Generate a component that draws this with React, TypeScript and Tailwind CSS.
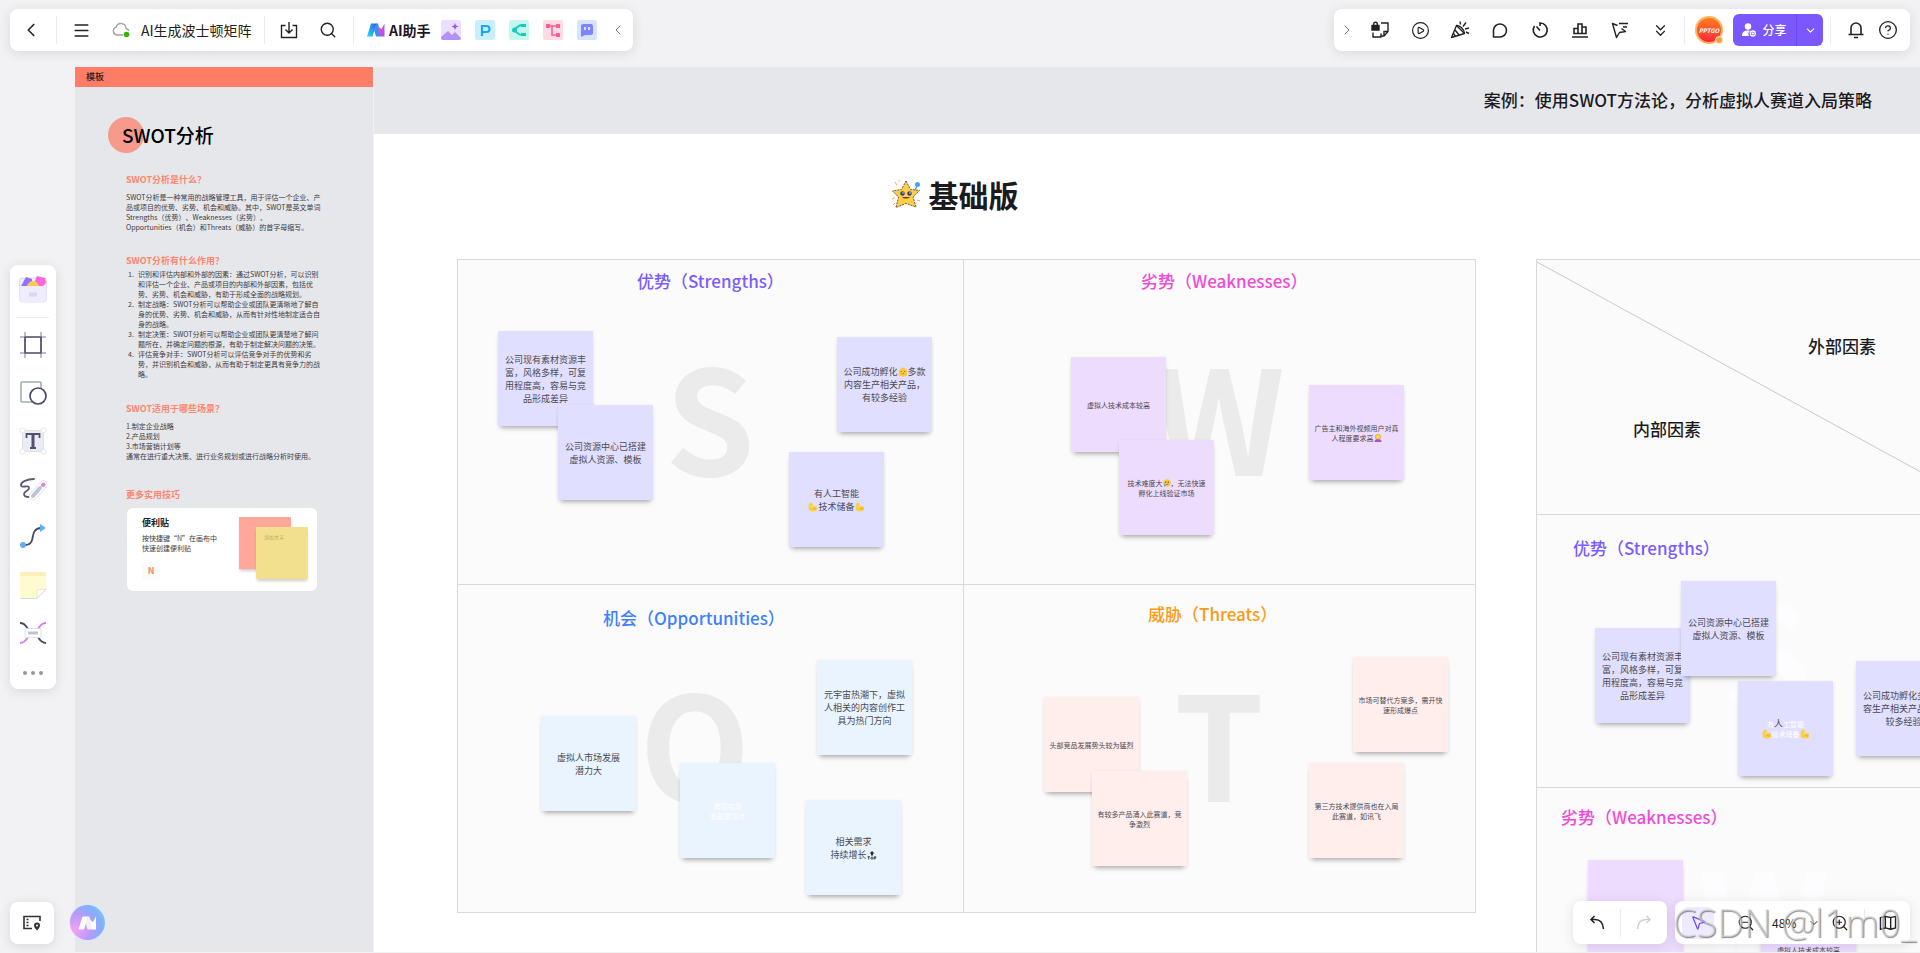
import type { ReactNode } from "react";
import {
  Bell,
  ChevronDown,
  ChevronLeft,
  ChevronRight,
  ChevronsDown,
  CircleHelp,
  CirclePlay,
  Menu,
  MousePointer2,
  Search,
  ZoomIn,
  ZoomOut,
} from "lucide-react";

/* ---------- shared bits ---------- */

const bar =
  "flex items-center rounded-lg bg-white shadow-[0_2px_12px_rgba(30,30,60,0.12)]";

function IconButton({
  label,
  className = "w-10",
  children,
}: {
  label: string;
  className?: string;
  children: ReactNode;
}) {
  return (
    <button
      type="button"
      aria-label={label}
      className={`flex h-8 shrink-0 items-center justify-center text-[#222] ${className}`}
    >
      {children}
    </button>
  );
}

function Divider({ className = "" }: { className?: string }) {
  return <span className={`h-7 w-px shrink-0 bg-[#ebebee] ${className}`} />;
}

/* ---------- emoji ---------- */

function Muscle() {
  return (
    <svg viewBox="0 0 18 18" className="inline size-[10px] align-[-2px]">
      <path
        d="M4 1l4 1 1 4-3 1v3c2-3 8-4 10 0 2 5-1 7-8 7-5 0-7-2-7-6 0-5 1-8 3-10z"
        fill="#fcd03d"
      />
      <path d="M9 11c2 2 4 2 6 0" stroke="#dd9a24" strokeWidth="1.4" fill="none" />
    </svg>
  );
}

function BlobFace() {
  return (
    <svg viewBox="0 0 18 18" className="inline size-[10px] align-[-2px]">
      <path
        d="M9 1c3 0 4 2 5 3 3 1 3 4 2 6 2 3 0 7-3 6-2 2-6 2-8 0-3 1-5-3-3-6-1-3 0-5 2-6 1-1 2-3 5-3z"
        fill="#fcc63d"
      />
      <circle cx="6" cy="8" r="1" fill="#8a5a1a" />
      <circle cx="12" cy="8" r="1" fill="#8a5a1a" />
      <path d="M7 12h4" stroke="#d8743a" strokeWidth="1.6" />
    </svg>
  );
}

function TearFace() {
  return (
    <svg viewBox="0 0 18 18" className="inline size-[8px] align-[-1px]">
      <circle cx="9" cy="9" r="8.5" fill="#fcc63d" />
      <circle cx="6" cy="7" r="1.5" fill="#5a3a12" />
      <circle cx="12" cy="7" r="1.5" fill="#5a3a12" />
      <path d="M7 13c1-2 4-2 5 0" stroke="#5a3a12" strokeWidth="1.4" fill="none" />
      <path d="M4 10c3 4 2 7 0 7s-3-3 0-7z" fill="#4aa6f5" />
    </svg>
  );
}

function Shrug() {
  return (
    <svg viewBox="0 0 18 18" className="inline size-[8px] align-[-1px]">
      <circle cx="9" cy="7" r="7" fill="#f5b335" />
      <circle cx="9" cy="7" r="4.5" fill="#fcd65e" />
      <path d="M1 18c0-5 4-6 8-6s8 1 8 6z" fill="#9b59d0" />
    </svg>
  );
}

function TopMark() {
  return (
    <svg viewBox="0 0 20 18" className="inline h-[9px] w-[10px] align-[-2px]">
      <path d="M10 0l5 5h-3v4H8V5H5z" fill="#2a2a30" />
      <path
        d="M1 11.5h5M3.5 11.5V17M14.5 17v-5.5h3v3h-3"
        stroke="#2a2a30"
        strokeWidth="1.7"
        fill="none"
      />
      <circle cx="10" cy="14.2" r="2.2" stroke="#2a2a30" strokeWidth="1.7" fill="none" />
    </svg>
  );
}

function StarFace() {
  return (
    <svg viewBox="0 0 30 30" className="size-[30px]">
      <path
        d="M15 2l4.500 8.500 9 1-6.500 6.500 3 10L15 24.500 5 28.500l2.500-10.500L1.500 12l9-1.500z"
        fill="#ffcf4a"
        stroke="#55482c"
        strokeWidth="0.9"
        strokeLinejoin="round"
        strokeDasharray="2 1"
      />
      <circle cx="11.5" cy="14.5" r="2.2" fill="#2c3d7c" />
      <circle cx="18.5" cy="14.5" r="2.2" fill="#2c3d7c" />
      <circle cx="12" cy="14" r="0.7" fill="#fff" />
      <circle cx="19" cy="14" r="0.7" fill="#fff" />
      <path d="M11 18c2 2 6 2 8 0z" fill="#7d2f1d" />
      <path
        d="M4 3l2 3M8 1l.5 1.500M1 20l3-1.500M2 26l2-2M26 21l3 1"
        stroke="#ff9b6b"
        strokeWidth="1"
      />
      <path d="M26 7l-2 4" stroke="#3f8ff5" strokeWidth="1.2" />
      <circle cx="26.5" cy="5.5" r="2.5" fill="#47a3ff" />
    </svg>
  );
}

/* ---------- board ---------- */

interface NoteData {
  x: number;
  y: number;
  small?: boolean;
  faded?: boolean;
  body: ReactNode;
}

interface CellData {
  title: string;
  titleAt: [number, number];
  titleClass: string;
  letter: string;
  letterAt: [number, number];
  noteClass: string;
  notes: NoteData[];
}

const reuse = (
  <>
    公司现有素材资源丰
    <br />
    富，风格多样，可复
    <br />
    用程度高，容易与竞
    <br />
    品形成差异
  </>
);

const center = (
  <>
    公司资源中心已搭建
    <br />
    虚拟人资源、模板
  </>
);

const strengths: CellData = {
  title: "优势（Strengths）",
  titleAt: [179, 8],
  titleClass: "text-[#7b5cff]",
  letter: "S",
  letterAt: [252, 153],
  noteClass: "bg-[#e1dfff]",
  notes: [
    { x: 40, y: 71, body: reuse },
    { x: 100, y: 145, body: center },
    {
      x: 379,
      y: 77,
      body: (
        <>
          公司成功孵化
          <BlobFace />
          多款
          <br />
          内容生产相关产品，
          <br />
          有较多经验
        </>
      ),
    },
    {
      x: 331,
      y: 192,
      body: (
        <>
          有人工智能
          <br />
          <Muscle />
          技术储备
          <Muscle />
        </>
      ),
    },
  ],
};

const weaknesses: CellData = {
  title: "劣势（Weaknesses）",
  titleAt: [177, 8],
  titleClass: "text-[#f04bd8]",
  letter: "W",
  letterAt: [255, 153],
  noteClass: "bg-[#eedcfe]",
  notes: [
    { x: 107, y: 97, small: true, body: "虚拟人技术成本较高" },
    {
      x: 155,
      y: 180,
      small: true,
      body: (
        <>
          技术难度大
          <TearFace />
          ，无法快速
          <br />
          孵化上线验证市场
        </>
      ),
    },
    {
      x: 345,
      y: 125,
      small: true,
      body: (
        <>
          广告主和海外视频用户对真
          <br />
          人程度要求高
          <Shrug />
        </>
      ),
    },
  ],
};

const opportunities: CellData = {
  title: "机会（Opportunities）",
  titleAt: [145, 20],
  titleClass: "text-[#3d80ff]",
  letter: "O",
  letterAt: [237, 154],
  noteClass: "bg-[#e9f4ff]",
  notes: [
    {
      x: 83,
      y: 131,
      body: (
        <>
          虚拟人市场发展
          <br />
          潜力大
        </>
      ),
    },
    {
      x: 222,
      y: 178,
      small: true,
      faded: true,
      body: (
        <>
          跨境电商
          <br />
          有政策扶持
        </>
      ),
    },
    {
      x: 359,
      y: 75,
      body: (
        <>
          元宇宙热潮下，虚拟
          <br />
          人相关的内容创作工
          <br />
          具为热门方向
        </>
      ),
    },
    {
      x: 348,
      y: 215,
      body: (
        <>
          相关需求
          <br />
          持续增长
          <TopMark />
        </>
      ),
    },
  ],
};

const threats: CellData = {
  title: "威胁（Threats）",
  titleAt: [184, 16],
  titleClass: "text-[#fa9a14]",
  letter: "T",
  letterAt: [255, 154],
  noteClass: "bg-[#ffeeec]",
  notes: [
    { x: 80, y: 112, small: true, body: "头部竞品发展势头较为猛烈" },
    {
      x: 128,
      y: 186,
      small: true,
      body: (
        <>
          有较多产品涌入此赛道，竞
          <br />
          争激烈
        </>
      ),
    },
    {
      x: 389,
      y: 72,
      small: true,
      body: (
        <>
          市场可替代方案多，需开快
          <br />
          速形成爆点
        </>
      ),
    },
    {
      x: 345,
      y: 178,
      small: true,
      body: (
        <>
          第三方技术提供商也在入局
          <br />
          此赛道，如讯飞
        </>
      ),
    },
  ],
};

const strengthsRow: CellData = {
  ...strengths,
  titleAt: [36, 20],
  letterAt: [230, 133],
  notes: [
    { x: 58, y: 113, body: reuse },
    { x: 144, y: 66, body: center },
    {
      x: 201,
      y: 166,
      small: true,
      faded: true,
      body: (
        <>
          有<span className="text-[9px] text-[#4a4a52]">人</span>工智能
          <br />
          <Muscle />
          技术储备
          <Muscle />
        </>
      ),
    },
    {
      x: 319,
      y: 146,
      body: (
        <>
          公司成功孵化多款内
          <br />
          容生产相关产品，有
          <br />
          较多经验
        </>
      ),
    },
  ],
};

const weaknessesRow: CellData = {
  ...weaknesses,
  titleAt: [24, 16],
  letterAt: [227, 128],
  notes: [
    { x: 51, y: 72, small: true, body: null },
    { x: 224, y: 114, small: true, body: "虚拟人技术成本较高" },
  ],
};

function Note({ note, className }: { note: NoteData; className: string }) {
  return (
    <div
      style={{ left: note.x, top: note.y }}
      className={`absolute flex size-[95px] items-center justify-center text-center whitespace-nowrap shadow-[0_5px_5px_-3px_rgba(0,0,0,0.28),0_1px_4px_rgba(0,0,0,0.08)] ${className} ${
        note.small ? "text-[7px] leading-[10px]" : "text-[9px] leading-[13px]"
      } ${note.faded ? "text-white" : "text-[#4a4a52]"}`}
    >
      <p>{note.body}</p>
    </div>
  );
}

function Cell({ cell, letterClass = "text-[#ebebeb]" }: { cell: CellData; letterClass?: string }) {
  return (
    <section className="relative border-r border-b border-[#d9d9db] bg-[#fbfbfb]">
      <span
        style={{ left: cell.letterAt[0], top: cell.letterAt[1] }}
        className={`absolute -translate-1/2 text-[144px] leading-none font-bold select-none ${letterClass}`}
      >
        {cell.letter}
      </span>
      <h3
        style={{ left: cell.titleAt[0], top: cell.titleAt[1] }}
        className={`absolute text-[17px] leading-[26px] font-medium whitespace-nowrap ${cell.titleClass}`}
      >
        {cell.title}
      </h3>
      {cell.notes.map((note) => (
        <Note key={`${note.x}-${note.y}`} note={note} className={cell.noteClass} />
      ))}
    </section>
  );
}

function BasicBoard() {
  return (
    <div className="w-[1019px] shrink-0">
      <h2 className="flex h-10 items-center justify-center gap-2 pr-6 text-[30px] font-bold text-[#1b1b1f]">
        <StarFace />
        基础版
      </h2>
      <div className="mt-[45px] grid grid-cols-[506px_512px] grid-rows-[325px_328px] border-t border-l border-[#d9d9db]">
        <Cell cell={strengths} />
        <Cell cell={weaknesses} />
        <Cell cell={opportunities} />
        <Cell cell={threats} />
      </div>
    </div>
  );
}

function AdvancedBoard() {
  return (
    <div className="mt-[85px] grid w-[467px] shrink-0 grid-rows-[255px_273px_300px] border-t border-l border-[#d9d9db]">
      <div className="relative border-r border-b border-[#d9d9db] bg-[#fbfbfb] text-[17px] leading-[26px] font-medium text-[#1b1b1f]">
        <svg viewBox="0 0 466 255" className="absolute top-0 left-0 h-[255px] w-[466px]">
          <path d="M0 2L466 257" stroke="#c9c9cc" strokeWidth="1" />
        </svg>
        <span className="absolute top-[73px] left-[271px]">外部因素</span>
        <span className="absolute top-[156px] left-[96px]">内部因素</span>
      </div>
      <Cell cell={strengthsRow} letterClass="text-[#fdfdff]" />
      <Cell cell={weaknessesRow} letterClass="text-[#fdfdff]" />
    </div>
  );
}

/* ---------- template guide ---------- */

const tips = [
  ["识别和评估内部和外部的因素：通过SWOT分析，可以识别", "和评估一个企业、产品或项目的内部和外部因素，包括优", "势、劣势、机会和威胁，有助于形成全面的战略规划。"],
  ["制定战略：SWOT分析可以帮助企业或团队更清晰地了解自", "身的优势、劣势、机会和威胁，从而有针对性地制定适合自", "身的战略。"],
  ["制定决策：SWOT分析可以帮助企业或团队更清楚地了解问", "题所在，并确定问题的根源，有助于制定解决问题的决策。"],
  ["评估竞争对手：SWOT分析可以评估竞争对手的优势和劣", "势，并识别机会和威胁，从而有助于制定更具有竞争力的战", "略。"],
];

const guideHead = "text-[9px] leading-3 font-bold text-[#ff8570]";
const guideText = "text-[7px] leading-[10px] whitespace-pre text-[#3c3c42]";

function Guide() {
  return (
    <aside className="w-[298px] shrink-0 bg-[#e6e7eb]">
      <div className="h-5 bg-[#ff7d66] pl-[11px] text-[9px] leading-5 font-medium text-[#2b1c1a]">
        模板
      </div>
      <div className="pl-[51px]">
        <h1 className="relative z-0 mt-[30px] flex h-9 items-center text-[19px] font-medium text-black before:absolute before:-left-[18px] before:-z-10 before:size-9 before:rounded-full before:bg-[#f69b8b]">
          <span className="-ml-1">SWOT分析</span>
        </h1>
        <h2 className={`mt-[21px] ${guideHead}`}>SWOT分析是什么？</h2>
        <p className={`mt-[6px] ${guideText}`}>
          {`SWOT分析是一种常用的战略管理工具，用于评估一个企业、产
品或项目的优势、劣势、机会和威胁。其中，SWOT是英文单词
Strengths（优势）、Weaknesses（劣势）、
Opportunities（机会）和Threats（威胁）的首字母缩写。`}
        </p>
        <h2 className={`mt-[23px] ${guideHead}`}>SWOT分析有什么作用？</h2>
        <ol className={`mt-0.5 ${guideText}`}>
          {tips.map((lines, index) => (
            <li key={lines[0]} className="flex">
              <span className="w-3 pl-0.5">{index + 1}.</span>
              <span>{lines.join("\n")}</span>
            </li>
          ))}
        </ol>
        <h2 className={`mt-6 ${guideHead}`}>SWOT适用于哪些场景？</h2>
        <p className={`mt-[6px] ${guideText}`}>
          {`1.制定企业战略
2.产品规划
3.市场营销计划等
通常在进行重大决策、进行业务规划或进行战略分析时使用。`}
        </p>
        <h2 className={`mt-7 ${guideHead}`}>更多实用技巧</h2>
        <div className="mt-[7px] ml-px flex h-[83px] w-[190px] rounded-md bg-white pt-[9px] pl-[15px]">
          <div className="w-[97px]">
            <h3 className="text-[9px] leading-3 font-bold text-[#222]">便利贴</h3>
            <p className={`mt-1 ${guideText}`}>{`按快捷键“N”在画布中
快速创建便利贴`}</p>
            <kbd className="mt-[9px] flex size-[18px] items-center justify-center rounded-sm bg-[#fafafa] font-[inherit] text-[9px] font-bold text-[#ff8570]">
              N
            </kbd>
          </div>
          <div className="relative size-[52px] bg-[#ffa798] shadow-[0_3px_3px_-1px_rgba(0,0,0,0.2)]">
            <div className="absolute top-[10px] left-[17px] size-[52px] bg-[#f3e08f] pt-1.5 pl-2 text-[5px] text-[#b9ab6c] shadow-[0_3px_3px_-1px_rgba(0,0,0,0.2)]">
              添加文字
            </div>
          </div>
        </div>
      </div>
    </aside>
  );
}

/* ---------- toolbars ---------- */

function BrandMark({ className, mono }: { className: string; mono?: boolean }) {
  const id = mono ? "brand-mono" : "brand";
  return (
    <svg viewBox="0 0 36 28" className={className}>
      <defs>
        <linearGradient id={`${id}-a`} x1="0" y1="1" x2="1" y2="0">
          <stop offset="0" stopColor={mono ? "#fff" : "#25e0e8"} />
          <stop offset="1" stopColor={mono ? "#fff" : "#2c5cf6"} />
        </linearGradient>
        <linearGradient id={`${id}-b`} x1="0" y1="0" x2="1" y2="1">
          <stop offset="0" stopColor={mono ? "#fff" : "#ff5aa8"} />
          <stop offset="1" stopColor={mono ? "#fff" : "#a04dff"} />
        </linearGradient>
      </defs>
      <path d="M8 1h12l-4 9-5 17H0z" fill={`url(#${id}-a)`} />
      <path d="M19 1h3l6 26H18l-4-13z" fill={mono ? "#f4f0ff" : "#3f8bff"} />
      <path d="M35 1v26h-8L22 7l7 5z" fill={`url(#${id}-b)`} />
    </svg>
  );
}

function AiTile({ label, className, children }: { label: string; className: string; children: ReactNode }) {
  return (
    <button type="button" aria-label={label} className={`size-5 shrink-0 overflow-hidden rounded-xs ${className}`}>
      <svg viewBox="0 0 20 20" className="size-5" fill="none">
        {children}
      </svg>
    </button>
  );
}

function FileBar() {
  return (
    <header className={`${bar} absolute top-[9px] left-[10px] h-[42px] w-[623px] pl-2`}>
      <IconButton label="返回" className="w-[26px]">
        <ChevronLeft size={22} strokeWidth={1.8} />
      </IconButton>
      <Divider className="ml-3" />
      <IconButton label="菜单" className="ml-[11px] w-[26px]">
        <Menu size={19} strokeWidth={1.8} />
      </IconButton>
      <svg viewBox="0 0 18 16" className="ml-[18px] h-4 w-[18px]" fill="none">
        <path
          d="M11 13H5a4 4 0 01-.8-7.800A5 5 0 0114 6.500c1.500.3 2.500 1.200 2.800 2.500"
          stroke="#a3a3a8"
          strokeWidth="1.4"
        />
        <circle cx="14.5" cy="12.5" r="2.8" fill="#35b30c" />
      </svg>
      <span className="ml-[11px] w-[111px] text-sm whitespace-nowrap text-[#222]">AI生成波士顿矩阵</span>
      <Divider className="ml-3" />
      <IconButton label="导入" className="ml-[11px] w-[26px]">
        <svg viewBox="0 0 18 18" className="size-[18px]" fill="none" stroke="currentColor" strokeWidth="1.4">
          <path d="M5.500 4.500H1.500v12h15v-12h-4M9 1v10.500M5.500 8.500L9 12l3.500-3.500" />
        </svg>
      </IconButton>
      <IconButton label="搜索" className="ml-[13px] w-[26px]">
        <Search size={18} strokeWidth={1.8} />
      </IconButton>
      <Divider className="ml-3" />
      <BrandMark className="ml-[13px] h-[14px] w-[18px]" />
      <span className="ml-1 w-10 text-sm font-bold whitespace-nowrap text-[#1d1525]">AI助手</span>
      <div className="ml-3 flex gap-[14px]">
        <AiTile label="AI图片" className="bg-[#eadfff]">
          <path d="M0 17l7-6 4 4 3-3 6 6v2H0z" fill="#b491f7" />
          <path d="M14 3l1 2.500 2.500 1-2.500 1-1 2.500-1-2.500-2.500-1 2.500-1z" fill="#8b5cf6" />
        </AiTile>
        <AiTile label="AI演示" className="bg-[#c9f0ff]">
          <path d="M7 16V6h4.500a3 3 0 010 6H7" stroke="#1ba5ff" strokeWidth="2.2" />
        </AiTile>
        <AiTile label="AI脑图" className="bg-[#c6f7ef]">
          <path d="M13 5c-5 0-6 5-9 5 3 0 4 5 9 5" stroke="#10cdbb" strokeWidth="1.8" />
          <circle cx="5.5" cy="10" r="2.5" fill="#10cdbb" />
          <path d="M12 4h5v3h-5zM12 13h5v3h-5z" fill="#10cdbb" />
        </AiTile>
        <AiTile label="AI流程" className="bg-[#ffdbe6]">
          <path d="M5 6h9M9 6v9h5" stroke="#ff5f98" strokeWidth="1.6" />
          <path d="M3 4h4v4H3zM13 4h4v4h-4zM13 13h4v4h-4z" fill="#ff5f98" />
        </AiTile>
        <AiTile label="AI对话" className="bg-[#d5e4ff]">
          <path d="M4 5l2-1h9l1 2v8l-2 1H8l-4 2z" fill="#7d84ff" />
          <path d="M8 7v3M12 7v3" stroke="#fff" strokeWidth="1.5" />
        </AiTile>
      </div>
      <IconButton label="收起" className="ml-[11px] w-5">
        <ChevronLeft size={16} strokeWidth={1.5} color="#777" />
      </IconButton>
    </header>
  );
}

function ShareBar() {
  return (
    <div className={`${bar} absolute top-[9px] right-[10px] h-[42px] w-[576px]`}>
      <IconButton label="展开" className="w-[26px]">
        <ChevronRight size={16} strokeWidth={1.5} color="#777" />
      </IconButton>
      <IconButton label="锁定">
        <svg viewBox="0 0 18 18" className="size-[18px]" fill="none" stroke="currentColor" strokeWidth="1.4">
          <path d="M1 4.500h7V9H1z" fill="currentColor" />
          <path d="M2.700 4.500V3a1.800 1.800 0 013.600 0v1.500M10 2h7v8.500L13 15h-3M17 10.500h-4V15M2 11.500V16h8v-3.500" />
        </svg>
      </IconButton>
      <IconButton label="演示">
        <CirclePlay size={19} strokeWidth={1.5} />
      </IconButton>
      <IconButton label="庆祝">
        <svg viewBox="0 0 20 20" className="size-5" fill="none" stroke="currentColor" strokeWidth="1.4">
          <path d="M6.500 5.500L1.500 17.500l13-4z" strokeLinejoin="round" />
          <path d="M6.500 5.500c3-.5 8 4 8 8M5 10l4.500 5.500M3.500 13.500l2 3M10.500 4.500l-.5-3M13 6.500l3-4M15 9l4-1M16 12l3 1.500" />
        </svg>
      </IconButton>
      <IconButton label="评论">
        <svg viewBox="0 0 18 18" className="size-[18px]" fill="none" stroke="currentColor" strokeWidth="1.6">
          <path d="M2.500 16V9a6.500 6.500 0 116.500 7z" strokeLinejoin="round" />
        </svg>
      </IconButton>
      <IconButton label="计时">
        <svg viewBox="0 0 18 18" className="size-[18px]" fill="none" stroke="currentColor" strokeWidth="1.6">
          <path d="M9 5V2a7 7 0 11-5.500 3M5.500 5.500L9 9.500" />
        </svg>
      </IconButton>
      <IconButton label="投票">
        <svg viewBox="0 0 18 18" className="size-[18px]" fill="none" stroke="currentColor" strokeWidth="1.6">
          <path d="M1 16h16M3 12.500v-5h4v5zM7 12.500V3h4v9.500zM11 12.500V6h4v6.500z" />
        </svg>
      </IconButton>
      <IconButton label="跟随">
        <svg viewBox="0 0 18 18" className="size-[18px]" fill="none" stroke="currentColor" strokeWidth="1.4">
          <path d="M6.500 4.500l-5-2 4 14 3-5 6-1-4-3M8 2.500h9M12 6h4" strokeLinejoin="round" />
        </svg>
      </IconButton>
      <IconButton label="更多">
        <ChevronsDown size={19} strokeWidth={1.6} />
      </IconButton>
      <Divider className="ml-1" />
      <div className="relative ml-[10px] flex size-7 shrink-0 items-center justify-center rounded-full border-2 border-[#f8b75c] bg-linear-to-b from-[#ff7a1a] to-[#fb1c3a] text-[6px] font-bold text-white italic">
        PPTGO
        <span className="absolute -right-0.5 -bottom-0.5 size-2 rounded-full border border-[#ffe2b0] bg-[#f0a33c]" />
      </div>
      <div className="ml-[10px] flex h-8 w-[90px] shrink-0 overflow-hidden rounded-md bg-[#7a57ff] text-white">
        <button type="button" className="flex w-[63px] items-center justify-center gap-1.5 text-xs font-medium">
          <svg viewBox="0 0 14 14" className="size-[14px]" fill="currentColor">
            <circle cx="6" cy="3.5" r="3.2" />
            <path d="M0 13c0-4 2-5.500 6-5.500 1 0 1.500.1 2 .3A4 4 0 007 13z" />
            <circle cx="10.8" cy="10.5" r="2.5" fill="none" stroke="currentColor" strokeWidth="1.3" />
            <path d="M10.800 9.200v2.600M9.500 10.500h2.600" stroke="currentColor" />
          </svg>
          分享
        </button>
        <button type="button" aria-label="分享选项" className="flex flex-1 items-center justify-center border-l border-[#6a48ec]">
          <ChevronDown size={13} strokeWidth={2} />
        </button>
      </div>
      <Divider className="ml-[7px]" />
      <IconButton label="通知" className="ml-[9px] w-8">
        <svg viewBox="0 0 18 18" className="size-[18px]" fill="none" stroke="currentColor" strokeWidth="1.6">
          <path d="M4 13.500V7a5 5 0 0110 0v6.500M1.500 13.500h15M7 16.500h4" />
        </svg>
      </IconButton>
      <IconButton label="帮助" className="w-8">
        <CircleHelp size={20} strokeWidth={1.6} />
      </IconButton>
    </div>
  );
}

const tools: { label: string; art: ReactNode }[] = [
  {
    label: "画框",
    art: (
      <>
        <path d="M1 6h4M23 6h4M1 22h4M23 22h4M6 1v4M22 1v4M6 23v4M22 23v4" stroke="#a3acba" strokeWidth="1.5" />
        <path d="M6 6h16v16H6z" stroke="#4c4966" strokeWidth="1.7" fill="#fff" />
      </>
    ),
  },
  {
    label: "形状",
    art: (
      <>
        <rect x="2" y="3" width="20" height="20" rx="1" stroke="#a3acba" strokeWidth="1.6" />
        <circle cx="19" cy="17" r="8" fill="#fff" stroke="#4c4966" strokeWidth="1.7" />
      </>
    ),
  },
  {
    label: "文本",
    art: (
      <>
        <path d="M3.500 3.500h21v21h-21z" fill="#e9edf5" stroke="#dfdfe6" />
        <path d="M7.500 11V7h13v4M11 21h6" stroke="#55506f" strokeWidth="1.8" />
        <path d="M14 7v14" stroke="#55506f" strokeWidth="3" />
        <g fill="#fff" stroke="#dcdce3" strokeWidth="0.7">
          <circle cx="3.5" cy="3.5" r="2.5" />
          <circle cx="24.5" cy="3.5" r="2.5" />
          <circle cx="3.5" cy="24.5" r="2.5" />
          <circle cx="24.5" cy="24.5" r="2.5" />
        </g>
      </>
    ),
  },
  {
    label: "画笔",
    art: (
      <>
        <path
          d="M15 4C8 4 2 7 2 10c0 4 8-1 8 3 0 3-5 3-5 6 0 2 2 3 5 3"
          stroke="#5d5874"
          strokeWidth="1.8"
          strokeLinecap="round"
        />
        <path d="M14 21L24.500 9.500" stroke="#d8d8e0" strokeWidth="8" strokeLinecap="round" />
        <path d="M14 21L24.500 9.500" stroke="#fff" strokeWidth="7" strokeLinecap="round" />
        <path d="M14 21l7-8" stroke="#bfc3d8" strokeWidth="4" strokeLinecap="round" />
        <path d="M24 10l.5-.5" stroke="#d985f2" strokeWidth="4" strokeLinecap="round" />
      </>
    ),
  },
  {
    label: "连线",
    art: (
      <>
        <path d="M4 22c16 1 4-16 18-17" stroke="#4c4966" strokeWidth="1.8" />
        <circle cx="4" cy="22" r="3" fill="#62adf7" />
        <path d="M21 1l6 4-6 4z" fill="#62adf7" />
      </>
    ),
  },
  {
    label: "便利贴",
    art: (
      <>
        <path d="M1 1h26v17l-9 9H1z" fill="#fffbd0" />
        <path d="M1 1h26v4H1z" fill="#fbf0b8" />
        <path d="M1 27.500h17l9-9" stroke="#d9d9d9" />
        <path d="M18 27v-8l9-1z" fill="#fff" stroke="#dcdcd4" strokeWidth="0.7" />
      </>
    ),
  },
  {
    label: "思维导图",
    art: (
      <>
        <path d="M1 4c5 0 6 3 8 6M27 24c-5 0-6-3-8-6" stroke="#4c4966" strokeWidth="1.8" />
        <path d="M27 4c-5 0-6 3-8 6M1 24c5 0 6-3 8-6" stroke="#d680f0" strokeWidth="1.8" />
        <rect x="6" y="9.5" width="16" height="9" rx="1" fill="#fff" stroke="#d8d8e0" strokeWidth="0.8" />
        <path d="M9 12.500h10v3H9z" fill="#bfc3d8" />
      </>
    ),
  },
];

function ToolRail() {
  return (
    <nav className="absolute top-[265px] left-[10px] flex w-[46px] flex-col items-center rounded-lg bg-white pt-2 pb-[13px] shadow-[0_2px_12px_rgba(30,30,60,0.12)]">
      <button type="button" aria-label="素材库" className="size-8">
        <svg viewBox="0 0 32 32" className="size-8">
          <rect x="2.5" y="5" width="27" height="24" rx="3" fill="#f1efff" stroke="#d4d2de" strokeWidth="0.8" />
          <path d="M4 13l5-9 6 2v7z" fill="#8f73ff" />
          <path d="M20 3l8 2 1 5-4 4h-6l-2-4z" fill="#ff66dd" />
          <circle cx="16" cy="14" r="6" fill="#ffc952" />
          <path d="M2.500 13h27v13a3 3 0 01-3 3h-21a3 3 0 01-3-3z" fill="#eeecfe" />
          <path d="M12 19.500h8v4h-8z" fill="#d9d6f7" />
        </svg>
      </button>
      <span className="mt-3 mb-[13px] h-px w-8 bg-[#ececf0]" />
      <div className="flex flex-col gap-5">
        {tools.map((tool) => (
          <button key={tool.label} type="button" aria-label={tool.label} className="size-7">
            <svg viewBox="0 0 28 28" className="size-7" fill="none">
              {tool.art}
            </svg>
          </button>
        ))}
      </div>
      <button type="button" aria-label="更多工具" className="mt-6 flex h-[5px] gap-1">
        <span className="size-1 rounded-full bg-[#97979e]" />
        <span className="size-1 rounded-full bg-[#97979e]" />
        <span className="size-1 rounded-full bg-[#97979e]" />
      </button>
    </nav>
  );
}

function ViewBar() {
  return (
    <div className="absolute right-[10px] bottom-[9px] flex gap-2">
      <div className={`${bar} h-[43px] w-[94px] justify-center`}>
        <IconButton label="撤销" className="w-[46px]">
          <svg viewBox="0 0 16 16" className="size-4" fill="none" stroke="currentColor" strokeWidth="1.5">
            <path d="M5.500 1L2 4.500 5.500 8M2 4.500h4c5 0 8 3 8.500 9.500" />
          </svg>
        </IconButton>
        <Divider />
        <IconButton label="重做" className="w-[46px]">
          <svg viewBox="0 0 16 16" className="size-4" fill="none" stroke="#cfcfd3" strokeWidth="1.5">
            <path d="M10.500 1L14 4.500 10.500 8M14 4.500h-4c-5 0-8 3-8.500 9.500" />
          </svg>
        </IconButton>
      </div>
      <div className={`${bar} h-[43px] w-[235px] pl-[7px]`}>
        <IconButton label="选择" className="w-8 rounded-md bg-[#efeaff]">
          <MousePointer2 size={17} strokeWidth={1.7} color="#6a45f5" />
        </IconButton>
        <Divider className="ml-2" />
        <IconButton label="缩小" className="ml-[11px] w-6">
          <ZoomOut size={18} strokeWidth={1.6} />
        </IconButton>
        <button type="button" className="ml-[14px] flex w-12 items-center justify-between text-xs text-[#222]">
          48%
          <ChevronDown size={12} strokeWidth={2} />
        </button>
        <IconButton label="放大" className="ml-2 w-6">
          <ZoomIn size={18} strokeWidth={1.6} />
        </IconButton>
        <Divider className="ml-3" />
        <IconButton label="小地图" className="ml-[11px] w-6">
          <svg viewBox="0 0 20 18" className="h-[16px] w-5" fill="none" stroke="currentColor" strokeWidth="1.6">
            <path d="M1.500 3L7 1.500v13L1.500 16zM7 1.500l6 1.500v13L7 14.500M13 3l5.500-1.500v13L13 16" />
          </svg>
        </IconButton>
      </div>
    </div>
  );
}

/* ---------- user watermark ---------- */

// centres of the repeated stamp, one row per diagonal step
const stamps = [-1, 0, 1, 2, 3, 4]
  .flatMap((row) =>
    [-1, 0, 1, 2, 3, 4, 5].map((col) => ({
      left: 590 + col * 445 - row * 211,
      top: 60 + col * 18 + row * 212,
    })),
  )
  .filter((at) => at.left > 60 && at.left < 1860 && at.top > 40 && at.top < 890);

function Stamps() {
  return (
    <div aria-hidden className="pointer-events-none absolute inset-0 overflow-hidden">
      {stamps.map((at) => (
        <p
          key={`${at.left}-${at.top}`}
          style={at}
          className="absolute -translate-1/2 -rotate-45 text-center font-['Liberation_Serif','Noto_Sans_CJK_SC',serif] text-lg leading-[22px] tracking-wider whitespace-nowrap text-black/[0.012]"
        >
          penghonghao
          <br />
          10.10.24.39
          <br />
          博思
          <br />
          2025/01/24 15:58
        </p>
      ))}
    </div>
  );
}

export default function App() {
  return (
    <div className="relative h-screen overflow-hidden bg-[#f2f2f4] font-['Noto_Sans_CJK_SC',sans-serif] [text-spacing-trim:space-all]">
      <div className="flex h-full gap-px pt-[67px] pb-px pl-[75px]">
        <Guide />
        <main className="min-w-0 flex-1 overflow-hidden bg-white">
          <div className="flex h-[67px] items-center justify-end bg-[#e6e7eb] pr-12 pb-0.5 text-[17px] font-medium text-[#1b1b1f]">
            案例：使用SWOT方法论，分析虚拟人赛道入局策略
          </div>
          <div className="flex items-start gap-[60px] pt-10 pl-[83px]">
            <BasicBoard />
            <AdvancedBoard />
          </div>
        </main>
      </div>

      <Stamps />
      <FileBar />
      <ShareBar />
      <ToolRail />
      <ViewBar />

      <button
        type="button"
        aria-label="图层"
        className="absolute bottom-[9px] left-[10px] flex h-[42px] w-11 items-center justify-center rounded-lg bg-white shadow-[0_2px_12px_rgba(30,30,60,0.12)]"
      >
        <svg viewBox="0 0 20 16" className="h-4 w-5" fill="none" stroke="#333" strokeWidth="1.6">
          <path d="M10 13.500H2v-12h16V6M4.500 4.500h2M4.500 7.500h2M4.500 10.500h2" />
          <path d="M15 15.500c-2-2.300-3-3.600-3-5a3 3 0 016 0c0 1.400-1 2.700-3 5z" fill="#333" stroke="none" />
          <circle cx="15" cy="10.5" r="1" fill="#fff" stroke="none" />
        </svg>
      </button>
      <button
        type="button"
        aria-label="AI助手"
        className="absolute bottom-3 left-[69px] flex size-[37px] items-center justify-center rounded-full border border-white/70 bg-[radial-gradient(circle_at_15%_70%,#f3a0f5_0%,#b79bf8_40%,#7cb2fb_70%,#a9d4ff_100%)]"
      >
        <BrandMark mono className="h-[14px] w-[19px]" />
      </button>

      <p className="pointer-events-none absolute right-1 bottom-1 font-['Open_Sans','Noto_Sans',sans-serif] text-[38px] leading-[54px] font-light text-[#dcdcdc]/60 [text-shadow:1px_1px_1px_rgba(90,90,90,0.7)]">
        CSDN @l1m0_
      </p>
    </div>
  );
}
